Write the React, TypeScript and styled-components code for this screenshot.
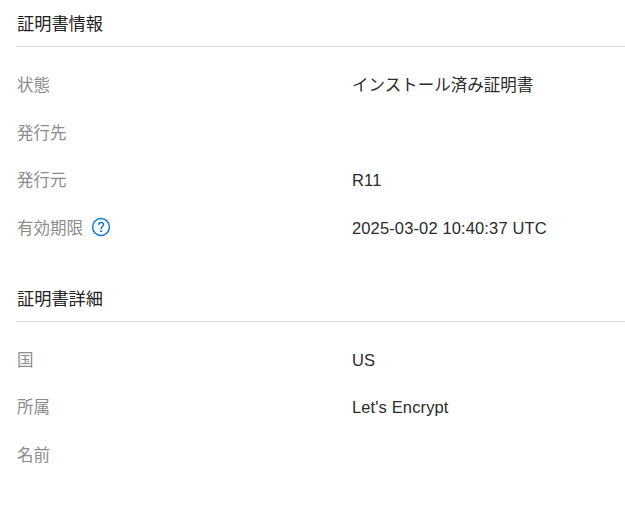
import React from "react";
import styled, { createGlobalStyle } from "styled-components";

const Global = createGlobalStyle`
  * { box-sizing: border-box; }
  body {
    margin: 0;
    background: #fff;
    color: #2b2b2b;
    font: 16.5px/24px "Liberation Sans", "Noto Sans CJK JP", sans-serif;
    overflow: hidden;
  }
`;
const Page = styled.main`
  height: 525px;
  padding: 10px 0 0 17px;
  overflow: hidden;
`;
const Section = styled.section`
  height: 274.75px;
`;
const Heading = styled.h2`
  margin: 0;
  height: 37px;
  padding-top: 2px;
  border-bottom: 1px solid #d9d9d9;
  color: #222;
  font-size: 17.2px;
  font-weight: 400;
  line-height: 24px;
`;
const List = styled.dl`
  margin: 0;
  padding-top: 14.4px;
`;
const Row = styled.div`
  display: grid;
  grid-template-columns: 335px 1fr;
  align-items: center;
  height: 47.5px;
`;
const Label = styled.dt`
  display: flex;
  align-items: center;
  gap: 8px;
  color: #8c8c8c;
`;
const Value = styled.dd<{ $latin: boolean }>`
  margin: 0;
  letter-spacing: ${(p) => (p.$latin ? "0.13px" : "0")};
`;
const Help = styled.svg`
  display: block;
  margin-top: -2px;
`;

const HelpIcon = () => (
  <Help width="20" height="20" viewBox="0 0 20 20" fill="none" stroke="#1279cf" strokeWidth="1.5">
    <circle cx="10" cy="10" r="8.4" />
    <path d="M7.7 7.7C7.8 6.2 8.8 5.4 10.1 5.4C11.5 5.4 12.5 6.3 12.5 7.6C12.5 9.4 10.1 9.8 10.1 11.9" />
    <path d="M10.1 13.3v1.8" strokeWidth="1.8" />
  </Help>
);

type Item = { label: string; value?: string; help?: boolean; latin?: boolean };
const info: Item[] = [
  { label: "状態", value: "インストール済み証明書" },
  { label: "発行先" },
  { label: "発行元", value: "R11", latin: true },
  { label: "有効期限", value: "2025-03-02 10:40:37 UTC", help: true, latin: true },
];
const details: Item[] = [
  { label: "国", value: "US", latin: true },
  { label: "所属", value: "Let's Encrypt", latin: true },
  { label: "名前" },
];

const Group = ({ title, items }: { title: string; items: Item[] }) => (
  <Section>
    <Heading>{title}</Heading>
    <List>
      {items.map((item) => (
        <Row key={item.label}>
          <Label>
            {item.label}
            {item.help && <HelpIcon />}
          </Label>
          <Value $latin={!!item.latin}>{item.value}</Value>
        </Row>
      ))}
    </List>
  </Section>
);

export default function App() {
  return (
    <Page lang="ja">
      <Global />
      <Group title="証明書情報" items={info} />
      <Group title="証明書詳細" items={details} />
    </Page>
  );
}
